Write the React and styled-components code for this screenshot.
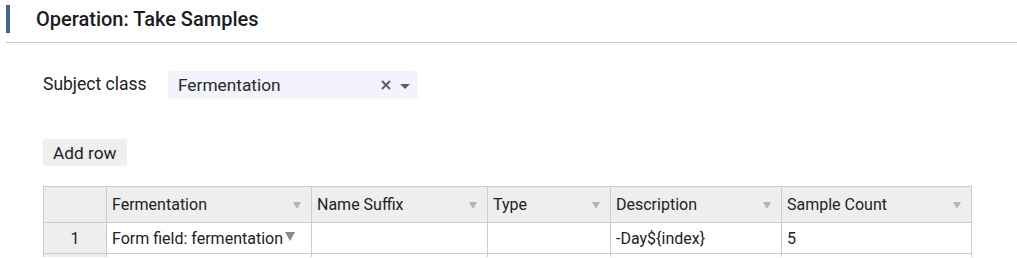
import React from "react";
import styled, { createGlobalStyle } from "styled-components";

const GlobalStyle = createGlobalStyle`
  body {
    margin: 0;
    background: #fff;
    font-family: Roboto, "Liberation Sans", sans-serif;
    color: #222;
  }
`;

const columns = [
  { title: "Fermentation", width: 205 },
  { title: "Name Suffix", width: 176 },
  { title: "Type", width: 123 },
  { title: "Description", width: 171 },
  { title: "Sample Count", width: 190 },
];

const rows = [["Form field: fermentation", "", "", "-Day${index}", "5"]];

const App = () => {
  return (
    <>
      <GlobalStyle />
      <Header>
        <Bar />
        <Title>Operation: Take Samples</Title>
      </Header>
      <Content>
        <FieldRow>
          <Label>Subject class</Label>
          <Select>
            <span>Fermentation</span>
            <SelectIcons>
              <svg width="10" height="10" viewBox="0 0 10 10">
                <path d="M1 1 L9 9 M9 1 L1 9" stroke="#5c5c6e" strokeWidth="1.9" />
              </svg>
              <Caret />
            </SelectIcons>
          </Select>
        </FieldRow>
        <Button>Add row</Button>
        <Table>
          <colgroup>
            <col style={{ width: 63 }} />
            {columns.map((c) => (
              <col key={c.title} style={{ width: c.width }} />
            ))}
          </colgroup>
          <thead>
            <tr>
              <HeadCell />
              {columns.map((c) => (
                <HeadCell key={c.title}>
                  {c.title}
                  <FilterArrow />
                </HeadCell>
              ))}
            </tr>
          </thead>
          <tbody>
            {rows.map((row, i) => (
              <tr key={i}>
                <RowNumber>{i + 1}</RowNumber>
                {row.map((value, j) => (
                  <Cell key={j}>
                    {value}
                    {j === 0 && <CellArrow />}
                  </Cell>
                ))}
              </tr>
            ))}
            <tr>
              <RowNumber $stub />
              {columns.map((c) => (
                <Cell key={c.title} $stub />
              ))}
            </tr>
          </tbody>
        </Table>
      </Content>
    </>
  );
};

const Header = styled.div`
  display: flex;
  align-items: flex-start;
  margin-left: 6px;
  padding-top: 5px;
  height: 43px;
  box-sizing: border-box;
  border-bottom: 1px solid #c9c9d6;
`;

const Bar = styled.div`
  width: 4px;
  height: 28px;
  background: #3d6690;
`;

const Title = styled.h1`
  margin: 0 0 0 26px;
  font-size: 20px;
  font-weight: 500;
  line-height: 28px;
  color: #1b1b24;
`;

const Content = styled.div`
  padding: 28px 0 0 43px;
`;

const FieldRow = styled.div`
  display: flex;
  align-items: center;
  height: 28px;
`;

const Label = styled.div`
  width: 125px;
  font-size: 17.5px;
  line-height: 20px;
  margin-top: -2px;
  color: #222;
`;

const Select = styled.div`
  display: flex;
  align-items: center;
  justify-content: space-between;
  width: 250px;
  height: 28px;
  box-sizing: border-box;
  padding: 0 8px 0 10px;
  background: #f3f3fc;
  border-radius: 3px;
  font-size: 17.3px;
  color: #2a2a2a;
`;

const SelectIcons = styled.div`
  display: flex;
  align-items: center;
  gap: 9px;
`;

const Caret = styled.span`
  width: 0;
  height: 0;
  border-left: 5px solid transparent;
  border-right: 5px solid transparent;
  border-top: 5px solid #5c5c6e;
  margin-top: 3px;
`;

const Button = styled.button`
  display: block;
  margin-top: 40px;
  height: 27px;
  padding: 0 10px;
  border: none;
  border-radius: 3px;
  background: #efefef;
  font-family: inherit;
  font-size: 17.3px;
  color: #222;
`;

const Table = styled.table`
  margin-top: 20px;
  border-collapse: collapse;
  table-layout: fixed;
  width: 928px;
  font-size: 16px;
`;

const HeadCell = styled.th`
  position: relative;
  height: 35px;
  padding: 0 0 0 5px;
  border: 1px solid #cccccc;
  background: #eeeeee;
  font-weight: 400;
  text-align: left;
  color: #222;
  white-space: nowrap;
`;

const FilterArrow = styled.span`
  position: absolute;
  right: 10px;
  top: 15px;
  border-left: 4px solid transparent;
  border-right: 4px solid transparent;
  border-top: 7px solid #b5b5b5;
`;

const RowNumber = styled.td`
  height: ${(p) => (p.$stub ? "3px" : "30px")};
  padding: 0;
  border: 1px solid #cccccc;
  border-bottom: ${(p) => (p.$stub ? "none" : "1px solid #cccccc")};
  background: #eeeeee;
  text-align: center;
  color: #222;
`;

const Cell = styled.td`
  height: ${(p) => (p.$stub ? "3px" : "30px")};
  padding: 0 0 0 5px;
  border: 1px solid #cccccc;
  border-bottom: ${(p) => (p.$stub ? "none" : "1px solid #cccccc")};
  white-space: nowrap;
  overflow: hidden;
  color: #222;
`;

const CellArrow = styled.span`
  display: inline-block;
  margin-left: 2px;
  vertical-align: 3px;
  border-left: 5px solid transparent;
  border-right: 5px solid transparent;
  border-top: 9px solid #8a8a8a;
`;

export default App;
